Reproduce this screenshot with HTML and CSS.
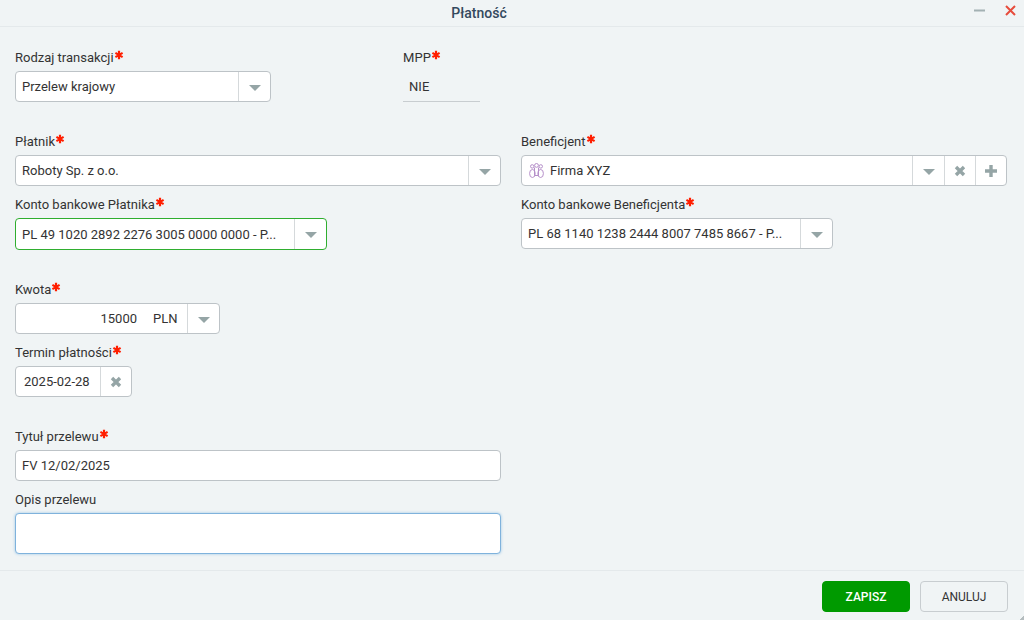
FILE: index.html
```html
<!DOCTYPE html>
<html lang="pl">

<head>
  <meta charset="UTF-8">
  <meta name="viewport" content="width=device-width, initial-scale=1.0">
  <title>Płatność</title>
  <link rel="stylesheet" href="styles.css">
</head>

<body>
  <form class="dialog">
    <header class="dialog-header">
      <h1 class="dialog-title">Płatność</h1>
      <div class="window-buttons">
        <button type="button" class="window-button" aria-label="Minimalizuj">
          <svg width="11" height="11" viewBox="0 0 11 11"><path d="M0 5.5h11" stroke="#a3b1b3" stroke-width="2"/></svg>
        </button>
        <button type="button" class="window-button" aria-label="Zamknij">
          <svg width="11" height="11" viewBox="0 0 11 11"><path d="M1 1l9 9M10 1l-9 9" stroke="#e74c3c" stroke-width="2"/></svg>
        </button>
      </div>
    </header>

    <main class="dialog-body">
      <section class="section section-type">
        <div class="field">
          <label class="label required" for="type">Rodzaj transakcji</label>
          <div class="control control-type">
            <select class="select" id="type">
              <option>Przelew krajowy</option>
            </select>
          </div>
        </div>
        <div class="field">
          <label class="label required" for="mpp">MPP</label>
          <input class="readonly" id="mpp" type="text" value="NIE" readonly>
        </div>
      </section>

      <section class="section">
        <div class="field">
          <label class="label required" for="payer">Płatnik</label>
          <div class="control">
            <select class="select" id="payer">
              <option>Roboty Sp. z o.o.</option>
            </select>
          </div>
        </div>
        <div class="field">
          <label class="label required" for="beneficiary">Beneficjent</label>
          <div class="control">
            <svg class="people" width="15" height="16" viewBox="0 0 15 16" fill="none" stroke="#b58fc9">
              <circle cx="3.2" cy="3.4" r="1.7"/>
              <circle cx="7.5" cy="2.4" r="1.9"/>
              <circle cx="11.8" cy="3.4" r="1.7"/>
              <ellipse cx="3.4" cy="10.5" rx="2.800" ry="4"/>
              <ellipse cx="11.6" cy="10.5" rx="2.800" ry="4"/>
              <path d="M5.5 4.500v8M9.500 4.500v8M5.800 12.500h3.400"/>
            </svg>
            <select class="select" id="beneficiary">
              <option>Firma XYZ</option>
            </select>
            <button type="button" class="addon" aria-label="Wyczyść">
              <svg width="12" height="12" viewBox="0 0 12 12"><path d="M2 2l8 8M10 2l-8 8" stroke="#95a5a6" stroke-width="3.400"/></svg>
            </button>
            <button type="button" class="addon" aria-label="Dodaj">
              <svg width="12" height="12" viewBox="0 0 12 12"><path d="M6 0v12M0 6h12" stroke="#95a5a6" stroke-width="3.400"/></svg>
            </button>
          </div>
        </div>
        <div class="field">
          <label class="label required" for="payer-account">Konto bankowe Płatnika</label>
          <div class="control control-account valid">
            <select class="select" id="payer-account">
              <option>PL 49 1020 2892 2276 3005 0000 0000 - P...</option>
            </select>
          </div>
        </div>
        <div class="field">
          <label class="label required" for="beneficiary-account">Konto bankowe Beneficjenta</label>
          <div class="control control-account">
            <select class="select" id="beneficiary-account">
              <option>PL 68 1140 1238 2444 8007 7485 8667 - P...</option>
            </select>
          </div>
        </div>
      </section>

      <section class="section">
        <div class="field field-first">
          <label class="label required" for="amount">Kwota</label>
          <div class="control control-amount">
            <input class="input amount" id="amount" type="text" value="15000">
            <select class="select currency" aria-label="Waluta">
              <option>PLN</option>
            </select>
          </div>
        </div>
        <div class="field field-first">
          <label class="label required" for="due">Termin płatności</label>
          <div class="control control-date">
            <input class="input date" id="due" type="text" value="2025-02-28">
            <button type="button" class="addon" aria-label="Wyczyść datę">
              <svg width="12" height="12" viewBox="0 0 12 12"><path d="M2 2l8 8M10 2l-8 8" stroke="#95a5a6" stroke-width="3.400"/></svg>
            </button>
          </div>
        </div>
      </section>

      <section class="section">
        <div class="field field-first">
          <label class="label required" for="title">Tytuł przelewu</label>
          <div class="control">
            <input class="input" id="title" type="text" value="FV 12/02/2025">
          </div>
        </div>
        <div class="field field-first">
          <label class="label" for="description">Opis przelewu</label>
          <textarea class="textarea" id="description"></textarea>
        </div>
      </section>
    </main>

    <footer class="dialog-footer">
      <button type="submit" class="button button-primary">ZAPISZ</button>
      <button type="button" class="button">ANULUJ</button>
    </footer>
  </form>
</body>

</html>
```
FILE: styles.css
```css
* {
  box-sizing: border-box;
}

body {
  margin: 0;
  background-color: #f0f4f5;
  color: #333;
  font-family: Roboto, Arial, sans-serif;
  font-size: 13px;
}

input,
select,
textarea,
button {
  font: inherit;
  color: inherit;
}

.dialog {
  display: flex;
  flex-direction: column;
  min-height: 100vh;
  /* Resize grip in the corner */
  background: linear-gradient(135deg, transparent 50%, #b4bcbe 50%) right bottom / 4px 4px no-repeat;
}

/* Header */
.dialog-header {
  display: flex;
  align-items: center;
  height: 27px;
  border-bottom: 1px solid #e4e9eb;
}

.dialog-title {
  flex: 1;
  margin: 0;
  font-size: 14px;
  font-weight: 500;
  line-height: 16px;
  color: #34495e;
  text-align: center;
}

.window-buttons {
  display: flex;
  gap: 20px;
  width: 66px;
  padding: 0 8px 6px 16px;
}

.window-button {
  display: flex;
  padding: 0;
  border: none;
  background: none;
  cursor: pointer;
}

/* Form */
.dialog-body {
  flex: 1;
  display: flex;
  flex-direction: column;
  gap: 31px;
  padding: 22px 17px 16px 15px;
}

.section {
  display: grid;
  grid-template-columns: 1fr 1fr;
  gap: 10px 20px;
}

.section-type {
  grid-template-columns: 39fr 61fr;
  column-gap: 2px;
}

.field {
  display: flex;
  flex-direction: column;
  gap: 4px;
  min-width: 0;
}

.field-first {
  grid-column: 1;
}

.label {
  display: flex;
  height: 18px;
  line-height: 18px;
}

.required::after {
  content: "";
  width: 10px;
  height: 10px;
  margin-top: 1px;
  background: url("data:image/svg+xml,%3Csvg xmlns='http://www.w3.org/2000/svg' width='10' height='10'%3E%3Cpath d='M5 .8v8.400M1.400 2.900l7.200 4.200M8.600 2.900L1.400 7.100' stroke='%23ff1e00' stroke-width='2.200'/%3E%3C/svg%3E") no-repeat;
}

.control {
  display: flex;
  align-items: center;
  height: 31px;
  border: 1px solid #bdc3c7;
  border-radius: 4px;
  background-color: white;
  overflow: hidden;
}

.control-type {
  max-width: 256px;
}

.control-account {
  max-width: 312px;
}

.control-amount {
  max-width: 205px;
}

.control-date {
  max-width: 117px;
}

.valid {
  height: 32px;
  border-color: #2fae2f;
}

.input,
.select {
  flex: 1;
  min-width: 0;
  height: 100%;
  padding: 0 6px;
  border: none;
  outline: none;
  background-color: transparent;
}

/* Caret and its divider */
.select {
  appearance: none;
  padding-right: 34px;
  background-image:
    url("data:image/svg+xml,%3Csvg xmlns='http://www.w3.org/2000/svg' width='12' height='6'%3E%3Cpath d='M0 0h12L6 6z' fill='%2395a5a6'/%3E%3C/svg%3E"),
    linear-gradient(#d5d9db, #d5d9db);
  background-repeat: no-repeat;
  background-position: right 9px top 13px, right 31px top;
  background-size: 12px 6px, 1px 100%;
}

.people {
  flex: none;
  margin-left: 7px;
}

.amount {
  text-align: right;
}

.currency {
  flex: none;
  width: 76px;
  padding-left: 10px;
}

.date {
  padding-left: 8px;
}

.addon {
  display: flex;
  align-items: center;
  justify-content: center;
  width: 31px;
  height: 100%;
  padding: 0;
  border: none;
  border-left: 1px solid #d5d9db;
  background: none;
  cursor: pointer;
}

.readonly {
  width: 77px;
  height: 31px;
  padding: 0 6px;
  border: none;
  border-bottom: 1px solid #c8cdd0;
  outline: none;
  background: none;
}

.textarea {
  height: 41px;
  padding: 6px;
  border: 1px solid #7fb2dc;
  border-radius: 4px;
  outline: none;
  background-color: white;
  box-shadow: 0 0 3px #9cc6e6;
  resize: none;
}

/* Footer */
.dialog-footer {
  display: flex;
  justify-content: flex-end;
  gap: 10px;
  padding: 10px 16px 8px;
  border-top: 1px solid #e4e9eb;
}

.button {
  width: 88px;
  height: 31px;
  padding: 0;
  border: 1px solid #c8cdd0;
  border-radius: 4px;
  background-color: transparent;
  font-size: 12px;
  cursor: pointer;
}

.button-primary {
  border-color: #009a00;
  background-color: #009a00;
  color: white;
  font-weight: 500;
}
```
